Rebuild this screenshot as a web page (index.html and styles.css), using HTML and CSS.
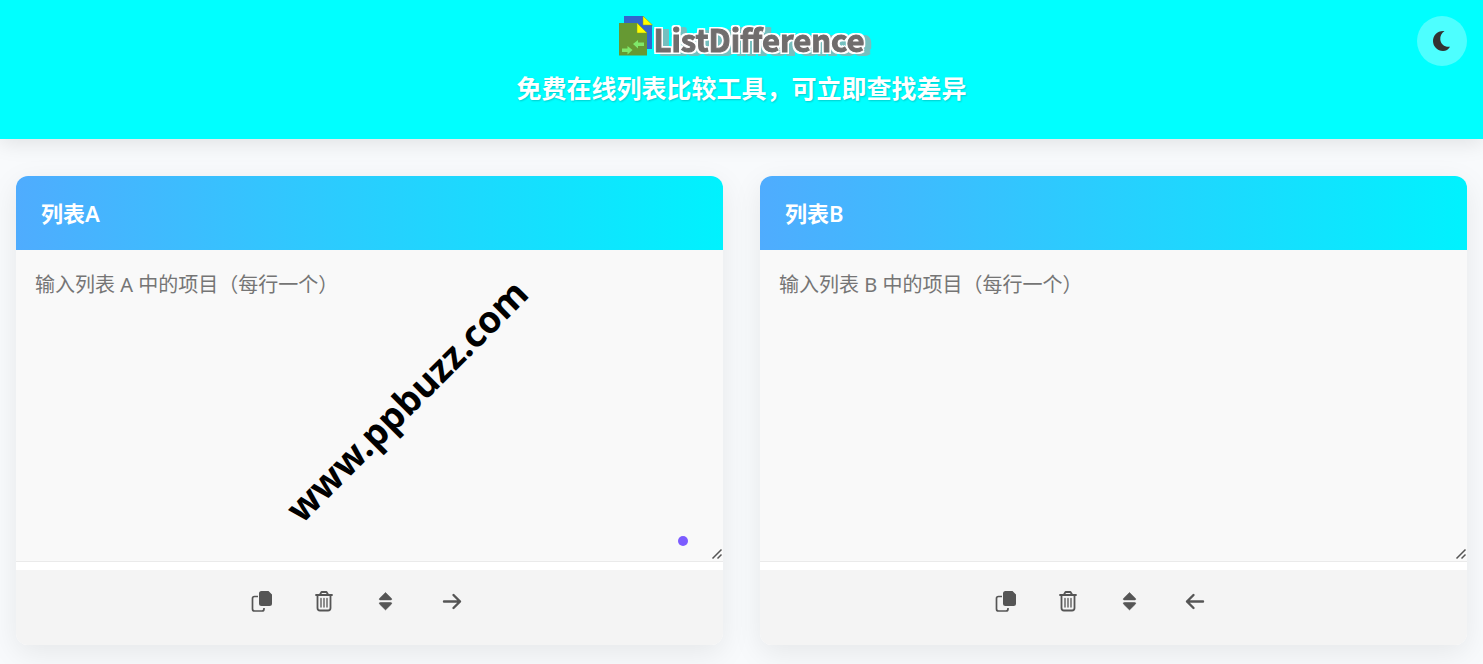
FILE: index.html
```
<!DOCTYPE html>
<html lang="zh-CN">
<head>
<meta charset="utf-8">
<meta name="viewport" content="width=device-width, initial-scale=1">
<title>ListDifference</title>
<link rel="stylesheet" href="styles.css">
</head>
<body>
<svg class="sprite" aria-hidden="true">
  <symbol id="copy" viewBox="0 0 22 22">
    <path d="M7 6.500H3.500a2 2 0 0 0-2 2v10.500a2 2 0 0 0 2 2h7.500a2 2 0 0 0 2-2V18" fill="none" stroke="currentColor" stroke-width="1.700"/>
    <path d="M10.500 1h7l3.500 3.500v9a2.500 2.500 0 0 1-2.500 2.500h-8A2.500 2.500 0 0 1 8 13.500v-10A2.500 2.500 0 0 1 10.500 1z" fill="currentColor"/>
  </symbol>
  <symbol id="trash" viewBox="0 0 22 22">
    <path d="M3 5h16M4.500 5.500v12.500a2.500 2.500 0 0 0 2.500 2.500h8a2.500 2.500 0 0 0 2.500-2.500V5.500M7 4.500l1.500-2.500h5L15 4.500" fill="none" stroke="currentColor" stroke-width="1.800" stroke-linecap="round" stroke-linejoin="round"/>
    <path d="M8 8.500v8.500M11 8.500v8.500M14 8.500v8.500" fill="none" stroke="currentColor" stroke-width="1.300" stroke-linecap="round"/>
  </symbol>
  <symbol id="sort" viewBox="0 0 22 22">
    <path d="M10.500 2.500 16.500 8.400q.8 1.500-.8 1.500H5.300Q3.700 9.900 4.500 8.400zM10.500 19.900 16.500 14q.8-1.500-.8-1.500H5.300q-1.600 0-.8 1.500z" fill="currentColor" stroke="currentColor" stroke-width=".6"/>
  </symbol>
  <symbol id="right" viewBox="0 0 22 22">
    <path d="M3 11.500h16M12.500 5 19 11.500l-6.500 6.500" fill="none" stroke="currentColor" stroke-width="2.400" stroke-linecap="round" stroke-linejoin="round"/>
  </symbol>
  <symbol id="left" viewBox="0 0 22 22">
    <path d="M18 11.500H2M8.500 5 2 11.500l6.500 6.500" fill="none" stroke="currentColor" stroke-width="2.400" stroke-linecap="round" stroke-linejoin="round"/>
  </symbol>
  <symbol id="grip" viewBox="0 0 12 12">
    <path d="M1.500 10.500l9-9M6.500 10.500l4-4" fill="none" stroke="#555" stroke-width="1.500"/>
  </symbol>
</svg>

<header class="site-header">
  <a class="logo" href="#">
    <svg class="logo-mark" viewBox="0 0 34 40" aria-hidden="true">
      <path d="M5 0h19l9 9v24H5z" fill="#36c"/>
      <path d="M24 0v9h9.500z" fill="#ff0" stroke="#8c9a20" stroke-width=".5"/>
      <path d="M0 7h18l10 10v22.500H0z" fill="#693"/>
      <path d="M18 7v10h10z" fill="#ff0" stroke="#8c9a20" stroke-width=".5"/>
      <path d="M14 28 19 24v2.500h6v3.500h-6v2.500zM13.500 34l-5-4v2.500H3V36h5.500v2.500z" fill="#7fe86a"/>
    </svg>
    <span class="logo-text">ListDifference</span>
  </a>
  <h1 class="tagline">免费在线列表比较工具，可立即查找差异</h1>
  <button class="theme-toggle" type="button" aria-label="切换主题">
    <svg class="moon" viewBox="0 0 20 22" aria-hidden="true"><path d="M12.500 1C9.500 3 8 6 8.300 9.500c.4 5 4.800 8 9.700 7.200C16.500 19.500 14 21 11 21 5.500 21 1 16.500 1 11S5.500.3 12.500 1z" fill="#333"/></svg>
  </button>
</header>

<main class="lists">
  <section class="card">
    <h2 class="card-title"><label for="list-a">列表A</label></h2>
    <div class="card-body">
      <textarea class="card-input" id="list-a" placeholder="输入列表 A 中的项目（每行一个）"></textarea>
      <svg class="grip" aria-hidden="true"><use href="#grip"/></svg>
      <span class="status-dot"></span>
      <span class="watermark">www.ppbuzz.com</span>
    </div>
    <div class="card-tools">
      <button class="tool" type="button" aria-label="复制"><svg><use href="#copy"/></svg></button>
      <button class="tool" type="button" aria-label="清空"><svg><use href="#trash"/></svg></button>
      <button class="tool" type="button" aria-label="排序"><svg><use href="#sort"/></svg></button>
      <button class="tool tool-move" type="button" aria-label="移到列表B"><svg><use href="#right"/></svg></button>
    </div>
  </section>
  <section class="card">
    <h2 class="card-title"><label for="list-b">列表B</label></h2>
    <div class="card-body">
      <textarea class="card-input" id="list-b" placeholder="输入列表 B 中的项目（每行一个）"></textarea>
      <svg class="grip" aria-hidden="true"><use href="#grip"/></svg>
    </div>
    <div class="card-tools">
      <button class="tool" type="button" aria-label="复制"><svg><use href="#copy"/></svg></button>
      <button class="tool" type="button" aria-label="清空"><svg><use href="#trash"/></svg></button>
      <button class="tool" type="button" aria-label="排序"><svg><use href="#sort"/></svg></button>
      <button class="tool tool-move" type="button" aria-label="移到列表A"><svg><use href="#left"/></svg></button>
    </div>
  </section>
</main>
</body>
</html>
```

FILE: styles.css
```
* { box-sizing: border-box; }

body {
  margin: 0;
  background: #f8fafc;
  color: #333;
  font-family: "Noto Sans", "Noto Sans CJK SC", sans-serif;
}

button { border: 0; padding: 0; cursor: pointer; font: inherit; }

.sprite { position: absolute; width: 0; height: 0; }

.site-header {
  position: relative;
  display: flex;
  flex-direction: column;
  align-items: center;
  padding: 16px 16px 32px;
  background: #0ff;
  box-shadow: 0 4px 20px rgba(0, 0, 0, .1);
}

.logo {
  display: flex;
  align-items: center;
  height: 40px;
  text-decoration: none;
}

.logo-mark { width: 34px; height: 40px; }

.logo-text {
  padding: 6px 0 0 1px;
  color: #706d6d;
  font: 700 31px/40px "Noto Sans CJK SC", sans-serif;
  -webkit-text-stroke: 1px #706d6d;
  text-shadow: 2px 0 #fff, -2px 0 #fff, 0 2px #fff, 0 -2px #fff,
    2px 2px #fff, -2px 2px #fff, 2px -2px #fff, -2px -2px #fff;
  filter: drop-shadow(6px 2px 0 #75bfbf);
}

.tagline {
  margin: 14px 0 0;
  color: #fff;
  font-size: 25px;
  font-weight: 700;
  line-height: 37px;
  text-shadow: 1px 1px 2px rgba(0, 0, 0, .2);
}

.theme-toggle {
  position: absolute;
  top: 16px;
  right: 16px;
  display: grid;
  place-items: center;
  width: 50px;
  height: 50px;
  border-radius: 50%;
  background: rgba(255, 255, 255, .3);
}

.moon { width: 20px; height: 22px; }

.lists {
  display: grid;
  grid-template-columns: 1fr 1fr;
  gap: 37px;
  padding: 37px 16px 19px;
}

.card {
  overflow: hidden;
  border-radius: 12px;
  background: #fff;
  box-shadow: 0 8px 30px rgba(0, 0, 0, .08);
}

.card-title {
  margin: 0;
  padding: 20px 25px;
  color: #fff;
  background: linear-gradient(90deg, #4facfe, #00f2fe);
  font-size: 22px;
  font-weight: 600;
  line-height: 34px;
}

.card-body {
  position: relative;
  padding-bottom: 8px;
}

.card-input {
  display: block;
  width: 100%;
  height: 312px;
  padding: 19px;
  border: 0;
  border-bottom: 1px solid #eaeaea;
  outline: 0;
  resize: vertical;
  background: #f9f9f9;
  color: #333;
  font: 20px/32px "Noto Sans", "Noto Sans CJK SC", sans-serif;
}

.card-input::placeholder { color: #757575; }

.card-input::-webkit-resizer { background: #f9f9f9; }

.grip {
  position: absolute;
  right: 0;
  bottom: 10px;
  width: 12px;
  height: 12px;
  pointer-events: none;
}

.card-tools {
  display: flex;
  justify-content: center;
  padding: 9px 22px 22px 0;
  background: #f4f4f4;
}

.tool {
  display: grid;
  place-items: center;
  width: 62px;
  height: 44px;
  background: none;
  color: #555;
}

.tool-move { width: 70px; }

.tool svg { width: 22px; height: 22px; }

.status-dot {
  position: absolute;
  right: 35px;
  bottom: 24px;
  width: 10px;
  height: 10px;
  border-radius: 50%;
  background: #7c5cff;
}

.watermark {
  position: absolute;
  left: 390px;
  top: 150px;
  color: #000;
  font: 700 37px/1 "Noto Sans", sans-serif;
  transform: translate(-50%, -50%) rotate(-45deg);
  pointer-events: none;
}
```
